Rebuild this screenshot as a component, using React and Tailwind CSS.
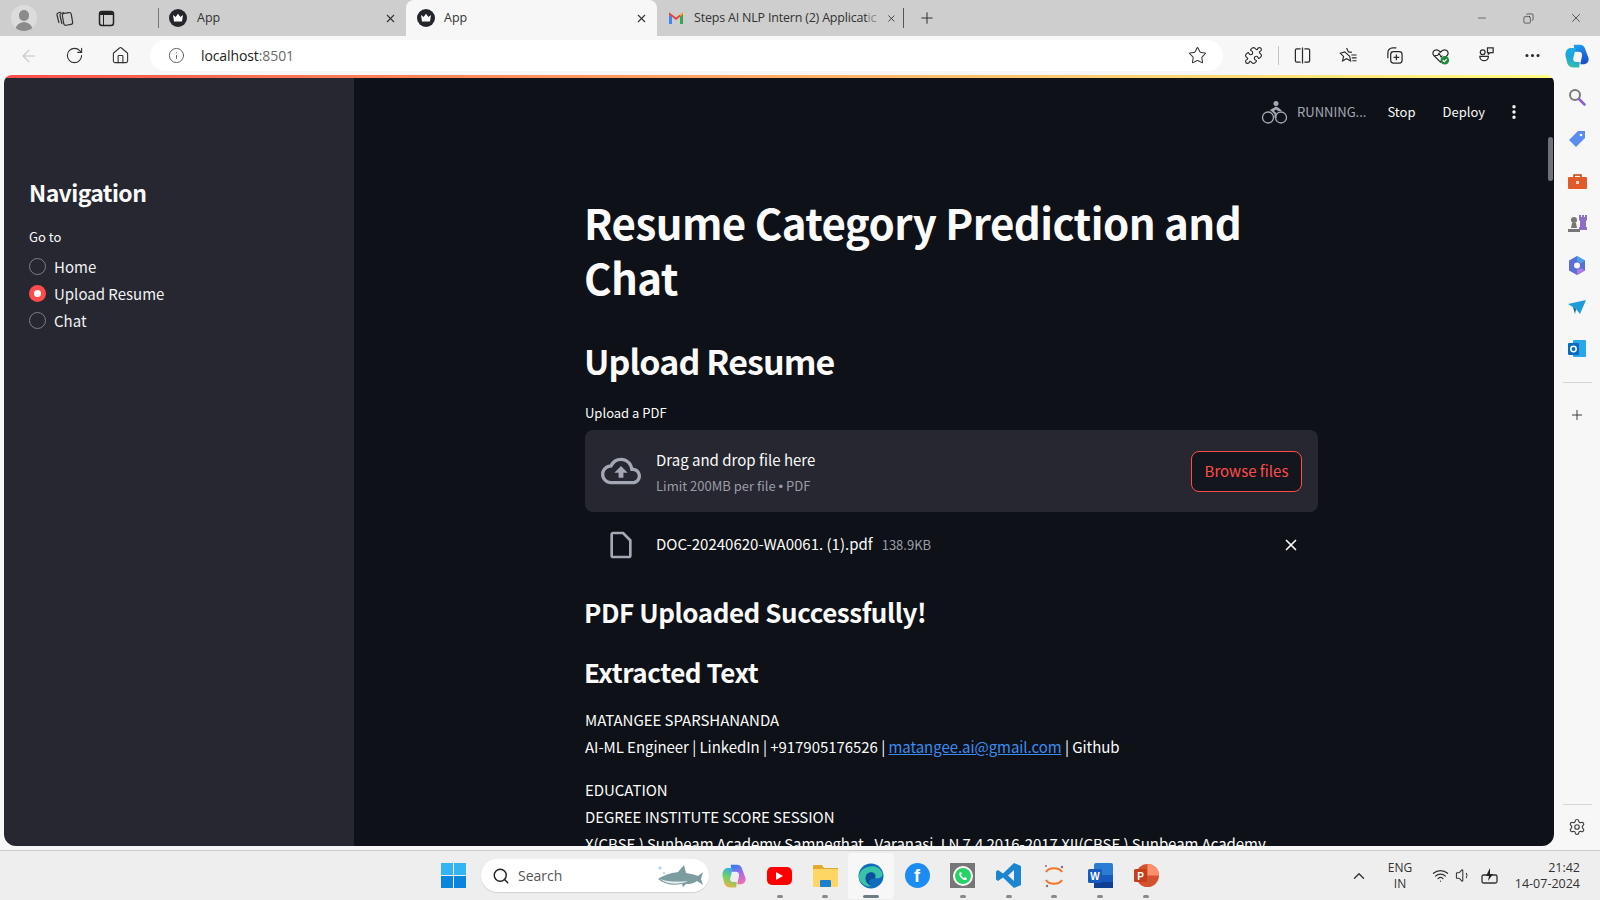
import {
  ArrowLeft, RotateCw, Home, Info, Star, Puzzle, Plus, Minus, X, Ellipsis,
  Search, Settings, EllipsisVertical, ChevronUp, Wifi, Volume1, Copy,
} from 'lucide-react';

const Crown = () => (
  <svg width="18" height="18" viewBox="0 0 18 18" className="shrink-0">
    <circle cx="9" cy="9" r="9" fill="#25262b" />
    <path d="M4 6l2.600 2L9 4.800 11.400 8 14 6l-1 6.500H5z" fill="#fff" />
  </svg>
);

const Gmail = () => (
  <svg width="16" height="14" viewBox="0 0 16 14" className="shrink-0">
    <path d="M1 13V3l3 2.200V13z" fill="#4285f4" />
    <path d="M12 13V5.200L15 3v10z" fill="#34a853" />
    <path d="M1 3.400V1.200L8 6.600l7-5.400v2.200L8 9z" fill="#ea4335" />
    <path d="M12 5.200L15 3V1.200L12 3.500z" fill="#fbbc04" />
  </svg>
);

const Avatar = () => (
  <div className="w-[26px] h-[26px] rounded-full bg-[#dcdcdc] flex flex-col items-center justify-end overflow-hidden shrink-0">
    <div className="w-[10px] h-[11px] rounded-full bg-[#8b8b8b]" />
    <div className="w-[18px] h-[9px] rounded-t-full bg-[#8b8b8b] mt-[1px]" />
  </div>
);

const ChromeTabs = () => (
  <div className="h-9 bg-[#cecece] flex items-center shrink-0 text-[#333] font-['Open_Sans',sans-serif] text-[12.5px]">
    <div className="ml-[11px]"><Avatar /></div>
    <svg width="20" height="20" viewBox="0 0 20 20" fill="none" stroke="#333" strokeWidth="1.200" className="ml-[18px] shrink-0">
      <path d="M4 15L2 7c-.2-1 .2-1.700 1-2l3-1" />
      <path d="M7 16L5 7.500c-.2-1 .2-1.700 1-2l3-1" />
      <rect x="8" y="5" width="9" height="12" rx="2" transform="rotate(-10 12 11)" />
    </svg>
    <svg width="17" height="17" viewBox="0 0 17 17" className="ml-[23px] shrink-0">
      <rect x="1.500" y="1.500" width="14" height="14" rx="2.500" fill="none" stroke="#222" strokeWidth="1.500" />
      <path d="M2 4a2 2 0 012-2h9a2 2 0 012 2v1H2z" fill="#222" />
      <path d="M5.500 5v10" stroke="#222" strokeWidth="1" />
    </svg>
    <div className="w-px h-5 bg-[#777] ml-[43px]" />
    <div className="w-[247px] h-full flex items-center pl-[10px] pr-[9px] gap-[10px]">
      <Crown />
      <span className="flex-1">App</span>
      <X className="w-[13px] h-[13px]" strokeWidth={2} />
    </div>
    <div className="w-[251px] h-full bg-[#f7f7f7] rounded-t-lg flex items-center pl-[11px] pr-[9px] gap-[9px]">
      <Crown />
      <span className="flex-1">App</span>
      <X className="w-[13px] h-[13px]" strokeWidth={2} />
    </div>
    <div className="w-[247px] h-full flex items-center pl-[11px] pr-[7px] gap-[10px]">
      <Gmail />
      <span className="flex-1 whitespace-nowrap tracking-[-0.2px]">Steps AI NLP Intern (2) Applicat<span className="text-[#8a8a8a]">ic</span></span>
      <X className="w-[13px] h-[13px]" strokeWidth={2} />
    </div>
    <div className="w-px h-5 bg-[#555] -ml-px" />
    <Plus className="w-[18px] h-[18px] ml-[14px]" strokeWidth={1.4} />
    <div className="flex-1" />
    <Minus className="w-[12px] h-[12px]" strokeWidth={1.3} />
    <Copy className="w-[11px] h-[11px] ml-[35px] -scale-x-100" strokeWidth={1.5} />
    <X className="w-[14px] h-[14px] mr-[17px] ml-[35px]" strokeWidth={1.3} />
  </div>
);

const Copilot = ({ size = 24, id, left, right }) => (
  <svg width={size} height={size} viewBox="0 0 24 24" className="shrink-0">
    <defs>
      <linearGradient id={`${id}a`} x1="0.3" y1="0" x2="0.6" y2="1">
        {right.map((c, i) => <stop key={c} offset={i / (right.length - 1)} stopColor={c} />)}
      </linearGradient>
      <linearGradient id={`${id}b`} x1="0.6" y1="0" x2="0.3" y2="1">
        {left.map((c, i) => <stop key={c} offset={i / (left.length - 1)} stopColor={c} />)}
      </linearGradient>
    </defs>
    <path d="M9 1.500h6c2 0 3.500 1.200 4.200 3.200l3.300 9c1 3-1 5.800-4 5.800h-3.500l1.600-7.500c.6-2.500-.8-4-2.800-4H9.500z" fill={`url(#${id}a)`} />
    <path d="M6 4.500h5l-2.400 9c-.6 2.500.8 4 2.800 4h3.100l-.5 5H8c-2.500 0-4.200-1.400-4.900-3.500l-1.500-6C.6 8.500 2.800 4.500 6 4.500z" fill={`url(#${id}b)`} />
  </svg>
);

const Toolbar = () => {
  const ic = 'w-[19px] h-[19px] text-[#2b2b2b] shrink-0';
  return (
    <div className="h-[39px] bg-[#f7f7f7] flex items-center shrink-0">
      <ArrowLeft className="w-5 h-5 ml-[19px] text-[#c4c4c4]" strokeWidth={1.3} />
      <RotateCw className="w-[19px] h-[19px] ml-[26px] text-[#333]" strokeWidth={1.4} />
      <Home className="w-[19px] h-[19px] ml-[27px] text-[#333]" strokeWidth={1.4} />
      <div className="ml-[20px] w-[1073px] h-[31px] bg-white rounded-full flex items-center pl-[18px] pr-[16px] mt-[-1px]">
        <Info className="w-[17px] h-[17px] text-[#555]" strokeWidth={1.3} />
        <span className="ml-[16px] flex-1 text-[14px] tracking-[-0.1px] text-[#222] font-['Open_Sans',sans-serif]">
          localhost<span className="text-[#6b6b6b]">:8501</span>
        </span>
        <Star className="w-[19px] h-[19px] text-[#333]" strokeWidth={1.3} />
      </div>
      <Puzzle className={`${ic} ml-[21px]`} strokeWidth={1.4} />
      <div className="w-px h-[19px] bg-[#c4c4c4] ml-[15px]" />
      <svg viewBox="0 0 20 20" className={`${ic} ml-[14px]`} fill="none" stroke="currentColor" strokeWidth="1.300">
        <path d="M8 3H4a1.500 1.500 0 00-1.500 1.500v11A1.500 1.500 0 004 17h4M12 3h4a1.500 1.500 0 011.500 1.500v11A1.500 1.500 0 0116 17h-4M10 1.500v17" />
      </svg>
      <svg viewBox="0 0 20 20" className={`${ic} ml-[27px]`} fill="none" stroke="currentColor" strokeWidth="1.200">
        <path d="M8 2l1.900 4.200 3.600.5M11.200 10.800l1 4.900L8 13.300l-4.200 2.400 1-4.700-3.400-3.300L6 6.200z" />
        <path d="M13 9.500h5.500M13.500 12.500h5M14 15.500h4.500" />
      </svg>
      <svg viewBox="0 0 20 20" className={`${ic} ml-[27px]`} fill="none" stroke="currentColor" strokeWidth="1.300">
        <rect x="6" y="6" width="12" height="12" rx="3" />
        <path d="M3 13V7a5 5 0 015-5h4M12 9v6M9 12h6" />
      </svg>
      <svg viewBox="0 0 20 20" className={`${ic} ml-[27px]`} fill="none">
        <path d="M10 17L3 10c-2-2-1-6 2.500-6C7.500 4 9 5 10 6.500 11 5 12.500 4 14.500 4 18 4 19 8 17 10z" stroke="#2b2b2b" strokeWidth="1.300" />
        <path d="M4 10h3l1.500-2.500 2 4L12 10" stroke="#2b2b2b" strokeWidth="1.100" />
        <circle cx="14.500" cy="15" r="4.500" fill="#1f8a3d" />
        <path d="M12.500 15l1.500 1.500 2.500-2.800" stroke="#fff" strokeWidth="1.200" />
      </svg>
      <svg viewBox="0 0 20 20" className={`${ic} ml-[27px]`} fill="none" stroke="currentColor" strokeWidth="1.300">
        <path d="M3 11h9a4.500 4.500 0 01-9 0z" />
        <circle cx="6" cy="6.500" r="2.500" />
        <path d="M11 2h6v5h-3l-2 1.500V7h-1z" />
      </svg>
      <Ellipsis className={`${ic} ml-[27px]`} strokeWidth={2} />
      <div className="ml-[22px]">
        <Copilot size={26} id="tb" left={['#16b0e8', '#1fa5d8', '#39c3a0']} right={['#1ea0f0', '#1b6fe0', '#1c4fc4']} />
      </div>
    </div>
  );
};

const Radio = ({ label, checked }) => (
  <div className="h-[27px] flex items-center gap-[8px]">
    {checked ? (
      <div className="w-[17px] h-[17px] rounded-full bg-[#ff4b4b] flex items-center justify-center">
        <div className="w-[7px] h-[7px] rounded-full bg-white" />
      </div>
    ) : (
      <div className="w-[17px] h-[17px] rounded-full border border-[#7d7e86]" />
    )}
    <span className="text-[15px] leading-none text-[#f1f1f4]">{label}</span>
  </div>
);

const Sidebar = () => (
  <div className="w-[350px] shrink-0 bg-[#262730] pl-[25px] pt-[96px] text-[#fafafa]">
    <h2 className="text-[23px] font-semibold leading-[36px] tracking-[-0.6px]">Navigation</h2>
    <p className="text-[13px] leading-5 mt-[17px] text-[#fafafa]">Go to</p>
    <div className="mt-[6px] flex flex-col">
      <Radio label="Home" />
      <Radio label="Upload Resume" checked />
      <Radio label="Chat" />
    </div>
  </div>
);

const Main = () => (
  <div className="flex-1 relative bg-[#0e1117] text-[#fafafa] overflow-hidden">
    <div className="h-[68px] flex items-center justify-end pr-[31px] text-[13px]">
      <svg width="27" height="24" viewBox="0 0 27 24" fill="none" className="shrink-0">
        <circle cx="7" cy="17.500" r="5.500" stroke="#a3a8b4" strokeWidth="1.300" />
        <circle cx="20" cy="17.500" r="5.500" stroke="#a3a8b4" strokeWidth="1.300" />
        <circle cx="15" cy="3.500" r="2.500" fill="#a3a8b4" />
        <path d="M9 10l6-3.500 3 1.500 3 3h-4l-2-1.500-2 1.500 2.500 2v5h-2v-4z" fill="#a3a8b4" />
      </svg>
      <span className="ml-[9px] text-[#a3a8b4]">RUNNING...</span>
      <span className="ml-[21px]">Stop</span>
      <span className="ml-[27px]">Deploy</span>
      <EllipsisVertical className="w-[18px] h-[18px] ml-[20px]" strokeWidth={2.6} />
    </div>
    <div className="ml-[231px] w-[733px]">
      <h1 className="text-[42px] font-bold leading-[55px] mt-[48px] tracking-[-0.55px] -ml-px">Resume Category Prediction and Chat</h1>
      <h2 className="text-[34px] font-semibold leading-[46px] mt-[34px] tracking-[-0.9px] -ml-px">Upload Resume</h2>
      <p className="text-[13px] leading-5 mt-[19px]">Upload a PDF</p>
      <div className="mt-[7px] h-[82px] rounded-lg bg-[#262730] flex items-center pl-[16px] pr-[16px]">
        <svg width="40" height="40" viewBox="0 0 24 24" fill="#a3a8b4" className="shrink-0">
          <path d="M19.350 10.040C18.670 6.590 15.640 4 12 4 9.110 4 6.600 5.640 5.350 8.040 2.340 8.360 0 10.910 0 14c0 3.310 2.690 6 6 6h13c2.760 0 5-2.240 5-5 0-2.640-2.050-4.780-4.650-4.960zM19 18H6c-2.210 0-4-1.790-4-4 0-2.050 1.530-3.760 3.560-3.970l1.070-.11.500-.950C8.080 7.140 9.940 6 12 6c2.620 0 4.880 1.860 5.390 4.430l.300 1.500 1.530.110c1.560.100 2.780 1.410 2.780 2.960 0 1.650-1.350 3-3 3zM8 13h2.550v3h2.900v-3H16l-4-4z" />
        </svg>
        <div className="ml-[15px] flex-1 mt-[3px]">
          <p className="text-[15px] leading-6">Drag and drop file here</p>
          <p className="text-[13px] leading-5 mt-[4px] text-[#9a9ca6]">
            Limit 200MB per file <span className="font-['Liberation_Sans',sans-serif]">•</span> PDF
          </p>
        </div>
        <div className="w-[111px] h-[41px] rounded-lg border border-[#ff4b4b] bg-[#13161d] flex items-center justify-center text-[15px] text-[#ff4b4b]">
          Browse files
        </div>
      </div>
      <div className="h-[65px] flex items-center pl-[20px] pr-[16px]">
        <svg width="32" height="32" viewBox="0 0 24 24" fill="#a3a8b4" className="shrink-0">
          <path d="M14 2H6c-1.100 0-2 .900-2 2v16c0 1.100.900 2 2 2h12c1.100 0 2-.900 2-2V8zM6 20V4h7l5 5v11z" />
        </svg>
        <span className="ml-[19px] text-[15px]">DOC-20240620-WA0061. (1).pdf</span>
        <span className="ml-[9px] text-[13px] text-[#9a9ca6] flex-1">138.9KB</span>
        <X className="w-[18px] h-[18px] mr-[2px]" strokeWidth={2.2} />
      </div>
      <h3 className="text-[26px] font-semibold leading-[36px] mt-[17px] tracking-[-0.45px] -ml-px">PDF Uploaded Successfully!</h3>
      <h3 className="text-[26px] font-semibold leading-[36px] mt-[24px] tracking-[-0.45px] -ml-px">Extracted Text</h3>
      <div className="text-[15px] leading-[27px] mt-[16px] tracking-[-0.05px]">
        <p>MATANGEE SPARSHANANDA</p>
        <p>
          AI-ML Engineer | LinkedIn | +917905176526 | <span className="text-[#3b8cf0] underline">matangee.ai@gmail.com</span> | Github
        </p>
        <p className="mt-[16px]">EDUCATION</p>
        <p>DEGREE INSTITUTE SCORE SESSION</p>
        <p>X(CBSE ) Sunbeam Academy Samneghat , Varanasi, I N 7.4 2016-2017 XII(CBSE ) Sunbeam Academy</p>
      </div>
    </div>
    <div className="absolute right-[1px] top-[59px] w-[5px] h-[44px] rounded-full bg-[#6f7178]" />
  </div>
);

const EdgeBar = () => {
  const item = 'h-[42px] flex items-center justify-center';
  return (
    <div className="w-[46px] shrink-0 bg-[#f7f7f7] flex flex-col items-center pt-[1px]">
      <div className={item}>
        <svg width="18" height="18" viewBox="0 0 18 18" fill="none">
          <circle cx="7" cy="7" r="5" stroke="#7a7a7a" strokeWidth="2" />
          <path d="M11 11l5.500 5.500" stroke="#8e5fc7" strokeWidth="2.500" strokeLinecap="round" />
        </svg>
      </div>
      <div className={item}>
        <svg width="18" height="18" viewBox="0 0 18 18">
          <path d="M1 10L10 1h7v7l-9 9z" fill="#5b8def" />
          <circle cx="13" cy="5" r="1.300" fill="#fff" />
        </svg>
      </div>
      <div className={item}>
        <svg width="19" height="17" viewBox="0 0 19 17">
          <path d="M6 4V2h7v2" fill="none" stroke="#c2410c" strokeWidth="1.500" />
          <rect x="0" y="4" width="19" height="12" rx="1" fill="#e2592a" />
          <rect x="8" y="8" width="3" height="3" fill="#fcd9c8" />
        </svg>
      </div>
      <div className={item}>
        <svg width="19" height="19" viewBox="0 0 19 19">
          <circle cx="6" cy="6" r="3" fill="#777" />
          <path d="M4 9h4l1 5H3zM0 15h12v3H0z" fill="#777" />
          <path d="M11 1h2v2h1V1h2v2h1V1h2v5l-1 1v6h1v3h-8v-3h1V7l-1-1z" fill="#8e6fc7" />
        </svg>
      </div>
      <div className={item}>
        <svg width="18" height="19" viewBox="0 0 18 19">
          <path d="M9 0l8 4.500v10L9 19l-8-4.500v-10z" fill="#5b6fd8" />
          <path d="M9 0l8 4.500-4 3L9 5z" fill="#4aa3e0" />
          <path d="M17 14.500L9 19v-5l4-2z" fill="#b07ae0" />
          <circle cx="9" cy="9.500" r="3" fill="#f7f7f7" />
        </svg>
      </div>
      <div className={item}>
        <svg width="18" height="14" viewBox="0 0 18 14">
          <path d="M0 4l18-4-6 14-4-5z" fill="#1f9bdc" />
          <path d="M5 7l3 2-1 5z" fill="#0f5f8f" />
        </svg>
      </div>
      <div className={item}>
        <svg width="18" height="18" viewBox="0 0 18 18">
          <rect x="5" y="0" width="13" height="17" rx="1" fill="#28a8ea" />
          <rect x="0" y="3" width="11" height="12" rx="1" fill="#0a6cbd" />
          <circle cx="5.500" cy="9" r="2.700" fill="none" stroke="#fff" strokeWidth="1.500" />
        </svg>
      </div>
      <div className="w-[29px] h-px bg-[#d5d5d5] mt-[12px]" />
      <Plus className="w-[16px] h-[16px] mt-[24px] text-[#333]" strokeWidth={1.4} />
      <div className="flex-1" />
      <div className="w-[29px] h-px bg-[#d5d5d5]" />
      <Settings className="w-[18px] h-[18px] mt-[13px] mb-[10px] text-[#444]" strokeWidth={1.6} />
    </div>
  );
};

const TaskIcon = ({ children, dot, active }) => (
  <div className={`w-[45.800px] h-[46px] rounded flex flex-col items-center justify-center relative ${active ? 'bg-[#f7f7f7]' : ''}`}>
    {children}
    {dot && <div className={`absolute bottom-[1px] h-[3px] rounded-full ${active ? 'w-[16px] bg-[#6f7c86]' : 'w-[6px] bg-[#8a8a8a]'}`} />}
  </div>
);

const Taskbar = () => (
  <div className="h-[50px] bg-[#eeeeee] border-t border-[#c9c9c9] flex items-center shrink-0 font-['Open_Sans',sans-serif] text-[#333]">
    <div className="ml-[441px] grid grid-cols-2 gap-[1px] w-[25px] h-[25px] shrink-0">
      <div className="bg-[#35b4f4]" />
      <div className="bg-[#35b4f4]" />
      <div className="bg-[#0a84dc]" />
      <div className="bg-[#0a84dc]" />
    </div>
    <div className="ml-[15px] w-[228px] h-[33px] bg-white rounded-full flex items-center pl-[11px] pr-[5px] shadow-[0_1px_1px_rgba(0,0,0,0.12)]">
      <Search className="w-[18px] h-[18px] text-[#222]" strokeWidth={1.9} />
      <span className="ml-[8px] flex-1 text-[14px] text-[#555]">Search</span>
      <svg width="48" height="24" viewBox="0 0 48 24">
        <path d="M2 15c8-5 14-6 20-7l6-7 2 8c6 1 10 2 12 3l5-4-2 7 2 6-6-4c-4 3-8 3-11 3l-3 3-1-3C16 22 8 20 2 15z" fill="#7d9c9f" />
        <path d="M4 15c8 3 18 3 28 2-8 4-20 4-28-2z" fill="#e5ecec" />
        <circle cx="4" cy="4" r="1.500" fill="#a9d3ea" />
        <circle cx="8" cy="9" r="1" fill="#a9d3ea" />
      </svg>
    </div>
    <div className="ml-[2px] flex items-center">
      <TaskIcon>
        <Copilot size={26} id="tk" left={['#2fa8f0', '#6fd06a', '#f4b13e']} right={['#2f7ff0', '#a86be8', '#f06fb0']} />
      </TaskIcon>
      <TaskIcon dot>
        <div className="w-[25px] h-[18px] rounded-[5px] bg-[#f00] flex items-center justify-center">
          <div className="w-0 h-0 border-y-[4px] border-y-transparent border-l-[7px] border-l-white" />
        </div>
      </TaskIcon>
      <TaskIcon dot>
        <svg width="25" height="23" viewBox="0 0 25 23">
          <path d="M0 2a1 1 0 011-1h8l2 3h14v3H0z" fill="#e3a92a" />
          <rect x="0" y="5" width="25" height="18" rx="1" fill="#fdd663" />
          <rect x="7" y="16" width="11" height="7" rx="1" fill="#1a7fd0" />
        </svg>
      </TaskIcon>
      <TaskIcon dot active>
        <svg width="26" height="26" viewBox="0 0 26 26">
          <circle cx="13" cy="13" r="12.500" fill="#0f6cbd" />
          <path d="M1 12C3 3 19-1 24 9c2 5-3 7-7 6 3-5-4-8-8-4-3 4-1 10 5 12-6 2-14-3-13-11z" fill="#37c4a8" />
          <path d="M9 11c4-3 9-1 8 4-5 1-9 3-3 8-6-1-8-8-5-12z" fill="#0f4f99" />
        </svg>
      </TaskIcon>
      <TaskIcon>
        <div className="w-[25px] h-[25px] rounded-full bg-[#1b8cf2] flex items-center justify-center text-white font-bold text-[18px] leading-none font-['Liberation_Sans',sans-serif]">f</div>
      </TaskIcon>
      <TaskIcon dot>
        <div className="w-[25px] h-[25px] bg-[#767676] flex items-center justify-center">
          <div className="w-[20px] h-[20px] rounded-full bg-[#25d366] border-2 border-white flex items-center justify-center">
            <svg width="10" height="10" viewBox="0 0 10 10">
              <path d="M2 1l2 1-1 2c.600 1.200 1.300 2 3 3l1.500-1 1.500 2c-1 2-4 1-6-1S1 2 2 1z" fill="#fff" />
            </svg>
          </div>
        </div>
      </TaskIcon>
      <TaskIcon dot>
        <svg width="25" height="25" viewBox="0 0 25 25">
          <path d="M18 0l7 3v19l-7 3L7 14.500 2 18l-2-1.500v-8L2 7l5 3.500z" fill="#1b85d0" />
          <path d="M18 7l-6 5.500 6 5.500z" fill="#eeeeee" />
        </svg>
      </TaskIcon>
      <TaskIcon dot>
        <svg width="24" height="26" viewBox="0 0 24 26" fill="none">
          <path d="M4 9c3-5 13-5 16 0M4 17c3 5 13 5 16 0" stroke="#f37726" strokeWidth="2.200" />
          <circle cx="4" cy="3" r="1" fill="#777" />
          <circle cx="20" cy="4" r="1.200" fill="#777" />
          <circle cx="5" cy="23" r="1.200" fill="#777" />
        </svg>
      </TaskIcon>
      <TaskIcon dot>
        <svg width="25" height="25" viewBox="0 0 25 25">
          <rect x="6" y="0" width="19" height="25" rx="2" fill="#2b7cd3" />
          <rect x="6" y="12" width="19" height="7" fill="#185abd" />
          <rect x="6" y="19" width="19" height="6" fill="#103f91" />
          <rect x="0" y="6" width="14" height="14" rx="1.500" fill="#185abd" />
          <text x="7" y="17" textAnchor="middle" fontSize="10" fontWeight="700" fill="#fff" fontFamily="Liberation Sans">W</text>
        </svg>
      </TaskIcon>
      <TaskIcon dot>
        <svg width="25" height="25" viewBox="0 0 25 25">
          <circle cx="13.500" cy="12.500" r="11.500" fill="#d35230" />
          <path d="M13.500 1a11.500 11.500 0 0111.500 11.500H13.500z" fill="#ff8f6b" />
          <rect x="0" y="6" width="13" height="13" rx="1.500" fill="#c43e1c" />
          <text x="6.500" y="16.500" textAnchor="middle" fontSize="10" fontWeight="700" fill="#fff" fontFamily="Liberation Sans">P</text>
        </svg>
      </TaskIcon>
    </div>
    <div className="flex-1" />
    <ChevronUp className="w-[18px] h-[18px] text-[#333]" strokeWidth={1.8} />
    <div className="ml-[17px] w-[30px] text-center text-[12px] leading-[16px]">
      <div>ENG</div>
      <div>IN</div>
    </div>
    <Wifi className="ml-[17px] w-[17px] h-[17px]" strokeWidth={1.7} />
    <Volume1 className="ml-[6px] w-[17px] h-[17px]" strokeWidth={1.5} />
    <svg width="18" height="18" viewBox="0 0 18 18" fill="none" className="ml-[9px]">
      <rect x="1" y="8" width="15" height="8" rx="1.500" stroke="#333" strokeWidth="1.300" />
      <path d="M9 1L5 9h3l-1 5 5-7H9z" fill="#222" />
    </svg>
    <div className="ml-[5px] mr-[20px] w-[76px] text-right text-[12.5px] leading-[16px]">
      <div>21:42</div>
      <div>14-07-2024</div>
    </div>
  </div>
);

export default function App() {
  return (
    <div className="h-screen w-full flex flex-col overflow-hidden bg-[#f7f7f7]">
      <ChromeTabs />
      <Toolbar />
      <div className="flex-1 flex min-h-0 pl-[4px]">
        <div className="flex-1 min-w-0 flex flex-col rounded-t-lg rounded-b-xl overflow-hidden font-['Noto_Sans_CJK_SC',sans-serif]">
          <div className="h-[3px] shrink-0 bg-gradient-to-r from-[#ff4b4b] to-[#fffd80]" />
          <div className="flex-1 flex min-h-0">
            <Sidebar />
            <Main />
          </div>
        </div>
        <EdgeBar />
      </div>
      <div className="h-[4px] shrink-0" />
      <Taskbar />
    </div>
  );
}
